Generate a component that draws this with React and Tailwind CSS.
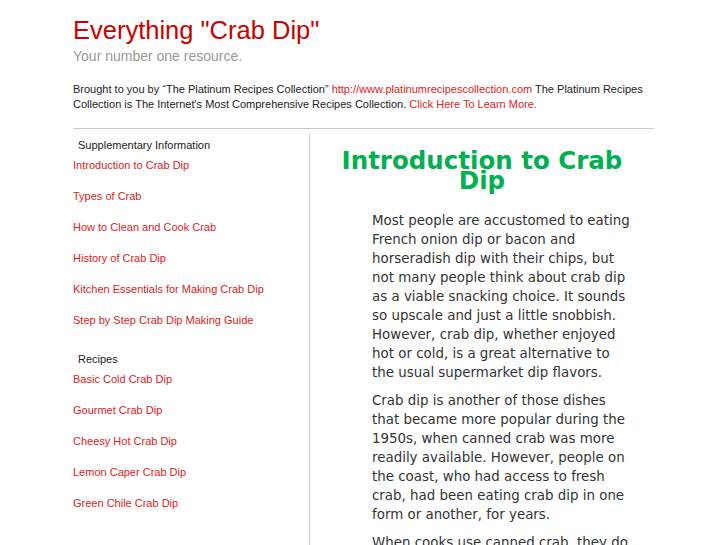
import React from 'react';

const supplementary = [
  'Introduction to Crab Dip',
  'Types of Crab',
  'How to Clean and Cook Crab',
  'History of Crab Dip',
  'Kitchen Essentials for Making Crab Dip',
  'Step by Step Crab Dip Making Guide',
];

const recipes = [
  'Basic Cold Crab Dip',
  'Gourmet Crab Dip',
  'Cheesy Hot Crab Dip',
  'Lemon Caper Crab Dip',
  'Green Chile Crab Dip',
];

const paragraphs = [
  'Most people are accustomed to eating French onion dip or bacon and horseradish dip with their chips, but not many people think about crab dip as a viable snacking choice. It sounds so upscale and just a little snobbish. However, crab dip, whether enjoyed hot or cold, is a great alternative to the usual supermarket dip flavors.',
  'Crab dip is another of those dishes that became more popular during the 1950s, when canned crab was more readily available. However, people on the coast, who had access to fresh crab, had been eating crab dip in one form or another, for years.',
  'When cooks use canned crab, they do not have to worry about cleaning and cooking the crab themselves, which makes the dip quick and easy to prepare for any gathering.',
];

const LinkList = ({ title, items }) => (
  <div>
    <div className="pl-[5px] text-[11px] leading-[15px] text-[#222]">{title}</div>
    <ul className="mt-[5px] flex flex-col gap-[16px]">
      {items.map((item) => (
        <li key={item} className="text-[11px] leading-[15px]">
          <a href="#" className="text-[#dd2222]">
            {item}
          </a>
        </li>
      ))}
    </ul>
  </div>
);

const App = () => {
  return (
    <div className="min-h-screen bg-white" style={{ fontFamily: '"Liberation Sans", Arial, sans-serif' }}>
      <div className="ml-[73px] w-[581px]">
        {/* Header */}
        <div className="pt-[14px]">
          <h1 className="text-[25.5px] leading-[32px] text-[#cc0000]">Everything "Crab Dip"</h1>
          <div className="mt-[1px] text-[14px] leading-[18px] text-[#999]">Your number one resource.</div>
          <p className="mt-[17px] text-[11px] leading-[15px] text-[#222]">
            Brought to you by “The Platinum Recipes Collection”{' '}
            <a href="#" className="text-[#dd2222]">http://www.platinumrecipescollection.com</a> The Platinum
            Recipes Collection is The Internet's Most Comprehensive Recipes Collection.{' '}
            <a href="#" className="text-[#dd2222]">Click Here To Learn More.</a>
          </p>
        </div>

        <div className="mt-[16px] border-t border-[#cccccc]" />

        {/* Body */}
        <div className="mt-[5px] flex">
          <div className="w-[237px] shrink-0 border-r border-[#cccccc] pt-[4px] pb-[40px] min-h-[420px]">
            <LinkList title="Supplementary Information" items={supplementary} />
            <div className="mt-[24px]">
              <LinkList title="Recipes" items={recipes} />
            </div>
          </div>

          <div className="flex-1" style={{ fontFamily: '"DejaVu Sans", Verdana, sans-serif' }}>
            <h2 className="mt-[17px] px-[20px] text-center text-[24.5px] font-bold leading-[20px] text-[#00b050]">
              Introduction to Crab Dip
            </h2>
            <div className="mt-[20px] ml-[62px] mr-[20px] flex flex-col gap-[9px]">
              {paragraphs.map((p, i) => (
                <p key={i} className="text-[13.4px] leading-[19px] text-[#333]">
                  {p}
                </p>
              ))}
            </div>
          </div>
        </div>
      </div>
    </div>
  );
};

export default App;
